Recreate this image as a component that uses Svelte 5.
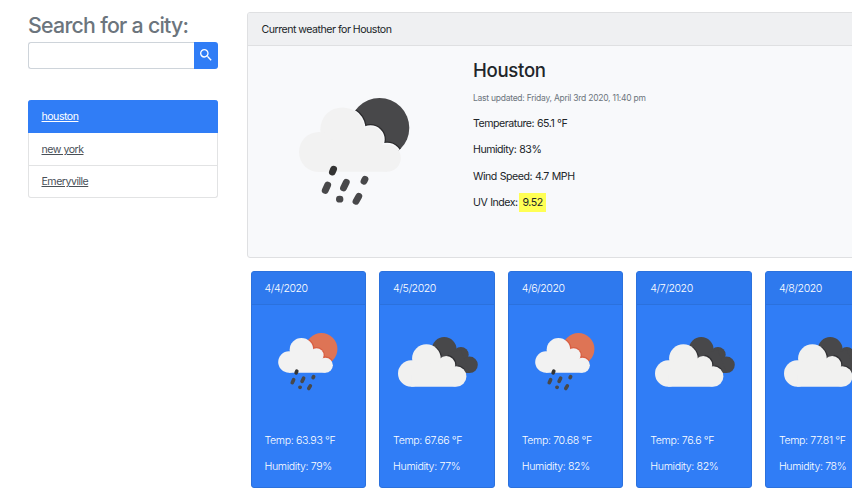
<script>
  const cities = ['houston', 'new york', 'Emeryville'];
  let active = $state('houston');
  let query = $state('');
  const details = ['Temperature: 65.1 °F', 'Humidity: 83%', 'Wind Speed: 4.7 MPH'];
  const forecast = [
    { date: '4/4/2020', icon: 'rain', temp: '63.93', humidity: 79 },
    { date: '4/5/2020', icon: 'clouds', temp: '67.66', humidity: 77 },
    { date: '4/6/2020', icon: 'rain', temp: '70.68', humidity: 82 },
    { date: '4/7/2020', icon: 'clouds', temp: '76.6', humidity: 82 },
    { date: '4/8/2020', icon: 'clouds', temp: '77.81', humidity: 78 }
  ];
</script>

{#snippet rain(disc, edge, glow)}
  <svg class="rain" viewBox="14 13 111 108">
    <defs>
      <clipPath id="disc-{glow}"><circle cx="94.5" cy="42.8" r="29.8" /></clipPath>
    </defs>
    <circle cx="94.5" cy="42.8" r="29.8" fill={disc} />
    <g clip-path="url(#disc-{glow})">
      <g fill={edge} stroke={edge} stroke-width="5">
        <circle cx="57.3" cy="44.4" r="22" /><circle cx="85.5" cy="54.5" r="13" /><circle cx="102" cy="73" r="14" />
      </g>
      {#if glow === 'night'}
        <g fill="#f8f9fb" stroke="#f8f9fb" stroke-width="2.4">
          <circle cx="57.3" cy="44.4" r="22" /><circle cx="85.5" cy="54.5" r="13" /><circle cx="102" cy="73" r="14" />
        </g>
      {/if}
    </g>
    <g fill="#f2f2f2">
      <circle cx="57.3" cy="44.4" r="22" /><circle cx="85.5" cy="54.5" r="13" />
      <circle cx="102" cy="73" r="13.8" /><circle cx="34" cy="67" r="20" />
      <path d="M34 60L57 50L85 56L102 70V86.8H34z" />
    </g>
    <g stroke="#48484a" stroke-width="6.8" stroke-linecap="round">
      <path stroke="#333" d="M47.4 87l1.2-2.8" />
      <path d="M40.2 105.5l2.5-5.5M58.5 103l2.8-5.8M79 96.2l1-2M54.4 114.2h.6M71 116.3l2.8-5" />
    </g>
  </svg>
{/snippet}

{#snippet clouds()}
  <svg class="clouds" viewBox="8.3 12 80 50">
    <g fill="#48484a">
      <circle cx="54.5" cy="24.4" r="12.4" /><circle cx="71.2" cy="29.8" r="7.8" />
      <circle cx="79.8" cy="39.8" r="8.3" /><path d="M49 30l22-5 9 23H60z" />
    </g>
    <g fill="none" stroke="#303033" stroke-width="1.5">
      <path d="M46 22.5a14.8 14.8 0 0 1 5.5 9M58 30.5a9.5 9.5 0 0 1 8 10M68 41a11 11 0 0 1 7 4" />
    </g>
    <g fill="#f1f1f0">
      <circle cx="36.7" cy="33.6" r="14.3" /><circle cx="56.5" cy="40" r="9" />
      <circle cx="66.5" cy="51.5" r="10.2" /><circle cx="21.5" cy="48.5" r="13.2" />
      <path d="M21.5 45L37 38L56 40L66 50V61.7H21.5z" />
    </g>
  </svg>
{/snippet}

<div class="page">
  <aside>
    <h1>Search for a city:</h1>
    <form class="search" onsubmit={(e) => e.preventDefault()}>
      <input bind:value={query} aria-label="City" />
      <button aria-label="Search">
        <svg viewBox="0 0 24 24" width="16" height="16" fill="#fff"><path d="M15.5 14h-.79l-.28-.27A6.47 6.47 0 0 0 16 9.5 6.5 6.5 0 1 0 9.5 16c1.61 0 3.09-.59 4.23-1.57l.27.28v.79l5 4.99L20.49 19l-4.99-5zm-6 0C7.01 14 5 11.99 5 9.5S7.01 5 9.5 5 14 7.01 14 9.5 11.99 14 9.5 14z" /></svg>
      </button>
    </form>
    <ul>
      {#each cities as city}
        <li class:active={city === active}>
          <button onclick={() => (active = city)}>{city}</button>
        </li>
      {/each}
    </ul>
  </aside>

  <main>
    <section class="current">
      <header>Current weather for Houston</header>
      <div class="body">
        <div class="picture">{@render rain('#48484a', '#2c2c2e', 'night')}</div>
        <div class="info">
          <h2>Houston</h2>
          <small>Last updated: Friday, April 3rd 2020, 11:40 pm</small>
          {#each details as line}<p>{line}</p>{/each}
          <p>UV Index: <span class="uv">9.52</span></p>
        </div>
      </div>
    </section>
    <div class="forecast">
      {#each forecast as day}
        <article>
          <header>{day.date}</header>
          <div class="icon">
            {#if day.icon === 'rain'}{@render rain('#de7455', '#d95f43', 'day')}{:else}{@render clouds()}{/if}
          </div>
          <p>Temp: {day.temp} °F</p>
          <p>Humidity: {day.humidity}%</p>
        </article>
      {/each}
    </div>
  </main>
</div>

<style>
  :global(body) { margin: 0; background: #fff; }
  .page {
    display: flex;
    width: 852px;
    height: 502px;
    overflow: hidden;
    box-sizing: border-box;
    padding: 12px 0 0 27.5px;
    font: 10.6px/16px Inter, 'Liberation Sans', sans-serif;
    letter-spacing: -0.5px;
    color: #212529;
  }
  .page * { box-sizing: border-box; }
  h1, h2, p, ul { margin: 0; padding: 0; font-weight: 400; }
  aside { width: 190.5px; flex: none; margin-right: 29px; }
  h1 { font-size: 21.3px; line-height: 27px; height: 30px; padding-left: 0.5px; letter-spacing: -0.72px; font-weight: 450; color: #6c757d; white-space: nowrap; }
  .search { display: flex; height: 26.5px; }
  input { flex: 1; min-width: 0; border: 1px solid #ced4da; border-right: 0; border-radius: 3px 0 0 3px; outline: none; padding: 0 8px; font: inherit; background: #fff; }
  .search button { width: 24.5px; padding: 0 0 2px; border: 0; border-radius: 0 3px 3px 0; background: #307df6; display: flex; align-items: center; justify-content: center; }
  .search svg { position: relative; top: 0.5px; }
  ul { list-style: none; margin-top: 31px; }
  li { height: 32.5px; padding: 2px 13px 0; display: flex; align-items: center; border: 1px solid #e2e3e4; border-top: 0; }
  li:first-child { border-radius: 3px 3px 0 0; }
  li:last-child { border-radius: 0 0 3px 3px; }
  li.active { background: #307df6; border-color: #307df6; height: 33.5px; padding-top: 3px; }
  li button { border: 0; padding: 0; background: none; font: inherit; letter-spacing: -0.5px; color: #495057; text-decoration: underline; }
  li.active button { color: #fff; }
  main { flex: none; width: 680px; }
  .current { height: 246px; border: 1px solid #dfe0e2; border-radius: 3px; background: #f8f9fb; }
  .current header { height: 33px; padding: 9px 13.5px 0; line-height: 16px; background: #eff0f2; border-bottom: 1px solid #dfe0e2; border-radius: 2px 2px 0 0; }
  .body { display: flex; }
  .picture { width: 225px; padding: 52px 0 0 51px; }
  .picture :global(svg) { display: block; width: 111px; height: 108px; }
  h2 { font-size: 18.6px; line-height: 22px; letter-spacing: -0.3px; font-weight: 450; margin: 13px 0 9px; }
  small { display: block; font-size: 8.5px; line-height: 16px; letter-spacing: -0.25px; color: #6c757d; margin-bottom: 10px; white-space: nowrap; }
  .info p { margin-bottom: 10.4px; letter-spacing: -0.48px; word-spacing: 0.4px; }
  .uv { display: inline-block; height: 19px; line-height: 19px; margin: -2px 0 -2px -1.5px; padding: 0 3.5px; background: #ffff54; }
  .forecast { display: flex; gap: 13.1px; padding: 13px 0 0 3.5px; }
  article { flex: none; width: 115.5px; height: 217px; background: #307df6; border: 1px solid #2b71dd; border-radius: 3px; color: #fff; overflow: hidden; letter-spacing: -0.36px; }
  article header { height: 33px; padding: 9px 13px 0; letter-spacing: -0.45px; font-weight: 300; background: #2e79ee; border-bottom: 1px solid #2b71dd; }
  article p { margin: 0 0 10.4px 13px; white-space: nowrap; font-weight: 300; }
  .icon { height: 127.6px; }
  .icon :global(svg) { display: block; }
  .icon :global(.rain) { width: 60px; height: 58px; margin: 0 0 0 26.5px; position: relative; top: 28px; }
  .icon :global(.clouds) { width: 80px; height: 50px; margin-left: 18px; position: relative; top: 32px; }
</style>
